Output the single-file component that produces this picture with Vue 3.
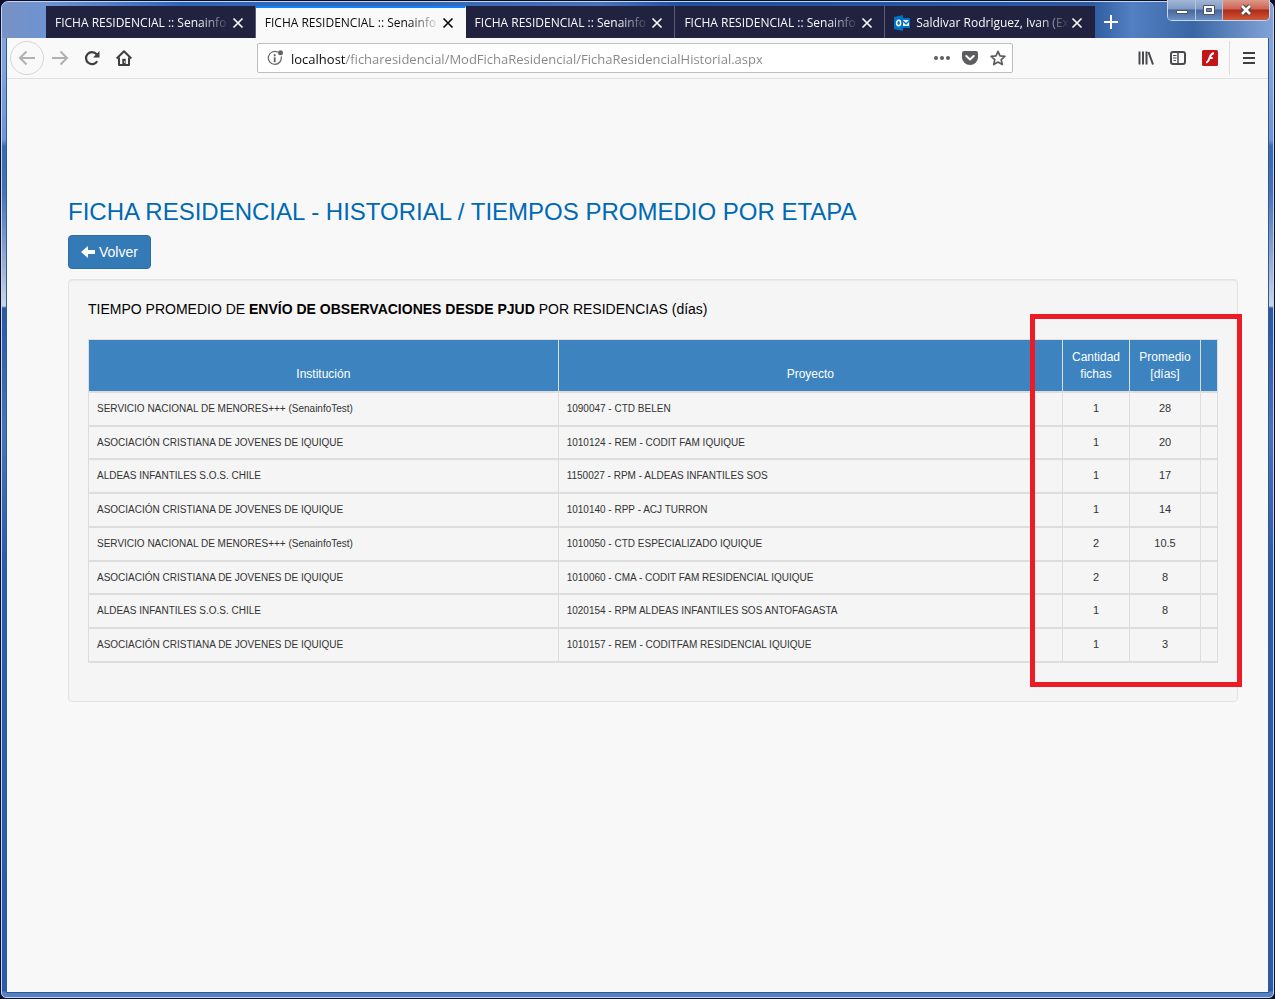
<script setup>
import { ref } from 'vue'

const tabs = [
  { title: 'FICHA RESIDENCIAL :: Senainfo :' },
  { title: 'FICHA RESIDENCIAL :: Senainfo :' },
  { title: 'FICHA RESIDENCIAL :: Senainfo :' },
  { title: 'FICHA RESIDENCIAL :: Senainfo :' },
  { title: 'Saldivar Rodriguez, Ivan (Ext', mail: true }
]
const active = ref(1)
const url = ref('localhost/ficharesidencial/ModFichaResidencial/FichaResidencialHistorial.aspx')

const rows = [
  ['SERVICIO NACIONAL DE MENORES+++ (SenainfoTest)', '1090047 - CTD BELEN', '1', '28'],
  ['ASOCIACIÓN CRISTIANA DE JOVENES DE IQUIQUE', '1010124 - REM - CODIT FAM IQUIQUE', '1', '20'],
  ['ALDEAS INFANTILES S.O.S. CHILE', '1150027 - RPM - ALDEAS INFANTILES SOS', '1', '17'],
  ['ASOCIACIÓN CRISTIANA DE JOVENES DE IQUIQUE', '1010140 - RPP - ACJ TURRON', '1', '14'],
  ['SERVICIO NACIONAL DE MENORES+++ (SenainfoTest)', '1010050 - CTD ESPECIALIZADO IQUIQUE', '2', '10.5'],
  ['ASOCIACIÓN CRISTIANA DE JOVENES DE IQUIQUE', '1010060 - CMA - CODIT FAM RESIDENCIAL IQUIQUE', '2', '8'],
  ['ALDEAS INFANTILES S.O.S. CHILE', '1020154 - RPM ALDEAS INFANTILES SOS ANTOFAGASTA', '1', '8'],
  ['ASOCIACIÓN CRISTIANA DE JOVENES DE IQUIQUE', '1010157 - REM - CODITFAM RESIDENCIAL IQUIQUE', '1', '3']
]
</script>

<template>
  <div class="desktop">
    <div class="window">
      <header class="titlebar">
        <nav class="tabs" aria-label="Pestañas">
          <div v-for="(tab, i) in tabs" :key="i" class="tab" :class="{ active: i === active }">
            <svg v-if="tab.mail" class="mail" width="16" height="16" viewBox="0 0 16 16" aria-hidden="true">
              <path d="M8 3h8v10H8z" fill="#0072c6" />
              <path d="M9 5h6v6H9z" fill="#fff" />
              <path d="M9 6l3 3 4-4" fill="none" stroke="#0072c6" stroke-width="1.5" />
              <path d="M0 2l9-2v16l-9-2z" fill="#0072c6" />
              <ellipse cx="4.6" cy="8" rx="2" ry="2.7" fill="none" stroke="#fff" stroke-width="1.5" />
            </svg>
            <button class="tab-title" type="button" @click="active = i">{{ tab.title }}</button>
            <button class="tab-close" type="button" aria-label="Cerrar pestaña">
              <svg width="12" height="12" viewBox="0 0 12 12"><path d="M1.5 1.5l9 9M10.5 1.5l-9 9" stroke="currentColor" stroke-width="1.700" /></svg>
            </button>
          </div>
        </nav>
        <button class="new-tab" type="button" aria-label="Nueva pestaña">
          <svg width="14" height="14" viewBox="0 0 14 14"><path d="M7 0v14M0 7h14" stroke="#fff" stroke-width="2" /></svg>
        </button>
        <div class="controls">
          <button class="ctl" type="button" aria-label="Minimizar">
            <svg width="14" height="12" viewBox="0 0 14 12"><path d="M1.500 6.500h11v3h-11z" fill="#fff" stroke="#4d5260" /></svg>
          </button>
          <button class="ctl" type="button" aria-label="Maximizar">
            <svg width="14" height="12" viewBox="0 0 14 12"><path d="M1.500 1.500h11v9h-11z" fill="#fff" stroke="#4d5260" /><path d="M4.500 4.500h5v3h-5z" fill="#7186ab" stroke="#4d5260" /></svg>
          </button>
          <button class="ctl close" type="button" aria-label="Cerrar">
            <svg width="14" height="12" viewBox="0 0 14 12"><path d="M3 2l8 8M11 2l-8 8" stroke="#4d3a42" stroke-width="4.600" /><path d="M3 2l8 8M11 2l-8 8" stroke="#fff" stroke-width="2.600" /></svg>
          </button>
        </div>
      </header>

      <div class="client">
        <div class="toolbar">
          <button class="tool back" type="button" aria-label="Atrás">
            <svg width="18" height="16" viewBox="0 0 18 16"><path d="M17 8H2M8.500 1.500L2 8l6.500 6.500" fill="none" stroke="#b1b1b3" stroke-width="2" /></svg>
          </button>
          <button class="tool" type="button" aria-label="Adelante">
            <svg width="18" height="16" viewBox="0 0 18 16"><path d="M1 8h15M9.500 1.500L16 8l-6.500 6.500" fill="none" stroke="#b1b1b3" stroke-width="2" /></svg>
          </button>
          <button class="tool" type="button" aria-label="Recargar">
            <svg width="16" height="16" viewBox="0 0 16 16"><path d="M13.200 11.200A6 6 0 1 1 12.600 4.300" fill="none" stroke="#3f3f42" stroke-width="2.200" /><path d="M15.500 1v6.500H9z" fill="#3f3f42" /></svg>
          </button>
          <button class="tool" type="button" aria-label="Inicio">
            <svg width="16" height="16" viewBox="0 0 16 16"><path d="M.7 8.500L8 1.200l7.300 7.300M3 7.500V15h10V7.500" fill="none" stroke="#3f3f42" stroke-width="2" stroke-linejoin="round" /><path d="M6.300 15V8.800h3.400V15z" fill="#3f3f42" /><circle cx="8.600" cy="12" r=".8" fill="#f9f9fa" /></svg>
          </button>
          <div class="urlbar">
            <svg width="17" height="17" viewBox="0 0 17 17" aria-hidden="true">
              <path d="M10.800 2.100A6.500 6.500 0 1 0 14.200 6.500" fill="none" stroke="#6a6a6d" stroke-width="1.300" />
              <circle cx="13.500" cy="2.800" r="2.500" fill="#626265" />
              <path d="M7.700 4.300v2M7.700 7.300v5" stroke="#626265" stroke-width="1.800" />
            </svg>
            <input v-model="url" class="url" type="text" aria-label="Dirección" spellcheck="false" />
            <button class="mini" type="button" aria-label="Acciones de página">
              <svg width="18" height="16" viewBox="0 0 18 16" fill="#5d5d60"><circle cx="3" cy="8" r="2" /><circle cx="9" cy="8" r="2" /><circle cx="15" cy="8" r="2" /></svg>
            </button>
            <button class="mini" type="button" aria-label="Guardar en Pocket">
              <svg width="16" height="16" viewBox="0 0 16 16"><path d="M2 1h12a2 2 0 0 1 2 2v4.500a8 7.500 0 0 1-16 0V3a2 2 0 0 1 2-2z" fill="#5d5d60" /><path d="M4.300 6L8 9.400 11.700 6" fill="none" stroke="#fff" stroke-width="2" stroke-linecap="round" stroke-linejoin="round" /></svg>
            </button>
            <button class="mini" type="button" aria-label="Marcador">
              <svg width="16" height="16" viewBox="0 0 16 16"><path d="M8 1.300l2 4.500 4.900.5-3.700 3.300 1.100 4.900L8 12l-4.300 2.500 1.100-4.900L1.100 6.300 6 5.800z" fill="none" stroke="#5d5d60" stroke-width="1.700" stroke-linejoin="round" /></svg>
            </button>
          </div>
          <button class="tool" type="button" aria-label="Biblioteca">
            <svg width="16" height="16" viewBox="0 0 16 16"><path d="M1.500 1.500v13M5 1.500v13M8.500 1.500v13M10.500 2l4.500 12.500" fill="none" stroke="#4a4a4d" stroke-width="2" /></svg>
          </button>
          <button class="tool" type="button" aria-label="Barra lateral">
            <svg width="16" height="16" viewBox="0 0 16 16"><rect x="1" y="2" width="14" height="12" rx="2" fill="none" stroke="#4a4a4d" stroke-width="2" /><path d="M8 2v12" stroke="#4a4a4d" stroke-width="1.500" /><path d="M3 5.500h3.500M3 8h3.500M3.500 10.500H6" stroke="#4a4a4d" /></svg>
          </button>
          <button class="tool" type="button" aria-label="Flash">
            <svg width="16" height="16" viewBox="0 0 16 16"><rect width="16" height="16" rx="1.500" fill="#c41418" /><path d="M12 3.300C8.500 3.500 8.300 6 7.300 8.500 6.500 11 5.800 12.300 4 12.500M7.500 8h3.200" fill="none" stroke="#fff" stroke-width="2" /></svg>
          </button>
          <span class="divider"></span>
          <button class="tool" type="button" aria-label="Menú">
            <svg width="14" height="14" viewBox="0 0 14 14"><path d="M1 2h12M1 7h12M1 12h12" stroke="#3f3f42" stroke-width="2" /></svg>
          </button>
        </div>

        <main class="page">
          <h1>FICHA RESIDENCIAL - HISTORIAL / TIEMPOS PROMEDIO POR ETAPA</h1>
          <button class="volver" type="button">
            <svg width="14" height="12" viewBox="0 0 14 12" aria-hidden="true"><path d="M0 6l7-6v4h7v4H7v4z" fill="#fff" /></svg>
            <span>Volver</span>
          </button>
          <section class="well">
            <p>TIEMPO PROMEDIO DE <b>ENVÍO DE OBSERVACIONES DESDE PJUD</b> POR RESIDENCIAS (días)</p>
            <table>
              <colgroup>
                <col class="c-inst" /><col /><col class="c-cant" /><col class="c-prom" /><col class="c-last" />
              </colgroup>
              <thead>
                <tr>
                  <th scope="col">Institución</th>
                  <th scope="col">Proyecto</th>
                  <th scope="col">Cantidad fichas</th>
                  <th scope="col">Promedio [días]</th>
                  <th></th>
                </tr>
              </thead>
              <tbody>
                <tr v-for="(r, i) in rows" :key="i">
                  <td><span class="name">{{ r[0] }}</span></td>
                  <td><span class="name">{{ r[1] }}</span></td>
                  <td class="num">{{ r[2] }}</td>
                  <td class="num">{{ r[3] }}</td>
                  <td></td>
                </tr>
              </tbody>
            </table>
            <div class="marker"></div>
          </section>
        </main>
      </div>
    </div>
  </div>
</template>

<style>
body { margin: 0; background: #0b1028; }
</style>

<style scoped>
* { box-sizing: border-box; }
button { border: 0; padding: 0; background: none; font: inherit; color: inherit; }
svg { display: block; flex: none; }

.desktop {
  min-height: 100vh;
  padding: 1px;
  display: flex;
  background: #0b1028;
  font-family: "Liberation Sans", Arial, sans-serif;
}
.window {
  flex: 1;
  min-width: 0;
  display: flex;
  flex-direction: column;
  padding: 0 4px 4px;
  border: 1px solid #c3d5f0;
  border-radius: 7px 7px 5px 5px;
  background: linear-gradient(#8aa8d8 0, #7fa3dc 70px, #6b95d8 138px, #376bb5 144px, #4472bb 190px, #8ba4d0 250px, #ccd6e8 304px, #2857a4 306px, #4674bd 430px, #2d5ca9 560px, #2b5aa8 calc(100% - 6px), #5480c6 calc(100% - 5px), #5480c6 100%);
}
.titlebar {
  position: relative;
  display: flex;
  align-items: flex-end;
  height: 36px;
  margin: 0 -4px;
  padding-left: 44px;
  border-radius: 6px 6px 0 0;
  background: linear-gradient(90deg, #7791c4 0, #6d94d2 46px, #2e64b8 180px, #3566b2 420px, #4674b9 600px, #1f4f9f 680px, #2758a5 1000px, #2d5b9f 1090px, #5380c2 1130px, #3966a5 1190px, #83a3d7 100%);
}
.tabs { display: flex; flex: 0 1 1049px; min-width: 0; }
.tab {
  display: flex;
  align-items: center;
  flex: 1 1 0;
  min-width: 0;
  height: 32px;
  padding: 2px 11px 0 9px;
  background: #20223f;
  color: #f9f9fa;
  border-right: 1px solid #5b5d72;
  font: 12px/16px "Open Sans", "Noto Sans", sans-serif;
}
.tab:last-child { border-right-color: #20223f; }
.tab.active { background: #f9f9fa; color: #0c0c0d; border-right-color: #f9f9fa; border-top: 2px solid #0a84ff; padding-top: 0; }
.mail { margin-right: 6px; }
.tab-title {
  flex: 1;
  min-width: 0;
  overflow: hidden;
  white-space: nowrap;
  text-align: left;
  mask-image: linear-gradient(to left, transparent 0, #000 32px);
}
.tab-close { margin-left: 1px; }
.new-tab { width: 32px; height: 32px; display: grid; place-items: center; }
.controls {
  position: absolute;
  top: -2px;
  right: 3px;
  display: flex;
  height: 21px;
  border: 1px solid #c9d7ec;
  border-top: 0;
  border-radius: 0 0 5px 5px;
  overflow: hidden;
}
.ctl { width: 28px; display: grid; place-items: center; background: linear-gradient(#a4b7d6 0, #7f9ac3 45%, #46679b 50%, #6c8fc3 100%); border-right: 1px solid #b3c4de; }
.ctl + .ctl { width: 27px; }
.ctl.close { width: 46px; border-right: 0; background: linear-gradient(#dc9a8c 0, #cf6352 45%, #ad2a17 50%, #cf5937 100%); }
.controls .ctl.close { width: 46px; }

.client {
  flex: 1;
  display: flex;
  flex-direction: column;
  border: 1px solid #31588f;
  border-top: 0;
  background: #f8f8f8;
}
.toolbar {
  display: flex;
  align-items: center;
  height: 41px;
  padding: 0 3px;
  background: #f9f9fa;
  border-bottom: 1px solid #e0e0e1;
}
.tool { flex: none; width: 32px; height: 32px; display: grid; place-items: center; }
.tool.back { width: 34px; height: 34px; border: 1px solid #d5d5d7; border-radius: 50%; }
.divider { width: 1px; height: 34px; margin: 0 3px; background: #dcdcde; }
.urlbar {
  flex: 1;
  min-width: 0;
  height: 30px;
  margin: 0 117px;
  padding-left: 9px;
  display: flex;
  align-items: center;
  background: #fff;
  border: 1px solid #bebebf;
  border-radius: 2px;
}
.url {
  flex: 1;
  min-width: 0;
  height: 26px;
  margin-left: 7px;
  padding: 2px 0 0;
  border: 0;
  outline: 0;
  color: transparent;
  background: linear-gradient(90deg, #0c0c0d 55px, #858588 55px);
  background-clip: text;
  font: 13px/24px "Open Sans", "Noto Sans", sans-serif;
}
.mini { width: 28px; height: 28px; display: grid; place-items: center; }

.page { padding: 119px 30px 40px 61px; }
h1 { margin: 0 0 10px; font-size: 24px; line-height: 27px; font-weight: 400; color: #0069b4; }
.volver {
  display: flex;
  align-items: center;
  gap: 4px;
  height: 34px;
  padding: 0 12px;
  border: 1px solid #2e6da4;
  border-radius: 4px;
  background: #337ab7;
  color: #fff;
  font-size: 14px;
  line-height: 20px;
}
.well {
  position: relative;
  margin-top: 10px;
  padding: 19px 19px 38px;
  border: 1px solid #e3e3e3;
  border-radius: 4px;
  background: #f5f5f5;
  box-shadow: inset 0 1px 1px rgba(0, 0, 0, .05);
}
p { margin: 0 0 20px; font-size: 14px; line-height: 20px; color: #000; }
table { width: 100%; table-layout: fixed; border-collapse: collapse; border: 1px solid #ddd; }
.c-inst { width: 41.6%; }
.c-cant { width: 67px; }
.c-prom { width: 71px; }
.c-last { width: 17px; }
th {
  padding: 9px 8px 8px;
  border: 1px solid #ddd;
  border-bottom-width: 2px;
  background: #3c83c0;
  color: #fff;
  font-size: 12px;
  line-height: 17px;
  font-weight: 400;
  vertical-align: bottom;
}
td { padding: 8px; border: 1px solid #ddd; border-bottom-width: 2px; font-size: 11px; line-height: 1.43; color: #333; }
.name { font-size: 10px; }
.num { text-align: center; }
.marker {
  position: absolute;
  top: 34px;
  right: -5px;
  bottom: 14px;
  width: 212px;
  border: 5px solid #ed1c24;
  pointer-events: none;
}
</style>
